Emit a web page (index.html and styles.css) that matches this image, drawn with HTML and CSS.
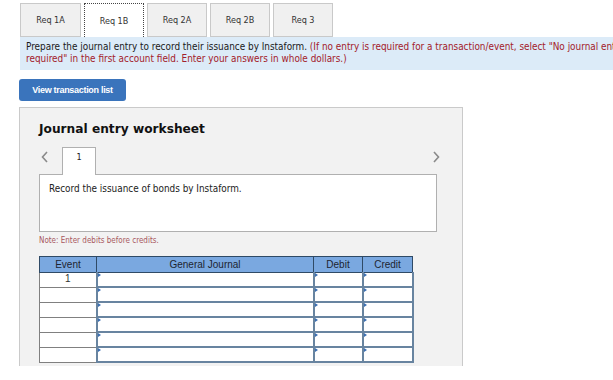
FILE: index.html
```html
<!DOCTYPE html>
<html>
<head>
<meta charset="utf-8">
<link rel="stylesheet" href="styles.css">
</head>
<body>
<div class="tabs">
  <div class="tab">Req 1A</div>
  <div class="tab active">Req 1B</div>
  <div class="tab">Req 2A</div>
  <div class="tab">Req 2B</div>
  <div class="tab">Req 3</div>
  <div class="tab-rest"></div>
</div>
<div class="instr">
  <span class="main">Prepare the journal entry to record their issuance by Instaform.</span> <span class="hint">(If no entry is required for a transaction/event, select "No journal entry</span><br><span class="hint">required" in the first account field. Enter your answers in whole dollars.)</span>
</div>
<button class="btn">View transaction list</button>
<div class="panel">
  <h2 class="title">Journal entry worksheet</h2>
  <div class="nav">
    <svg class="arrow" width="8" height="12" viewBox="0 0 8 12"><polyline points="6,1 1.5,6 6,11" fill="none" stroke="#8a8a8a" stroke-width="1.6"/></svg>
    <div class="pagetab">1</div>
    <svg class="arrow right" width="8" height="12" viewBox="0 0 8 12"><polyline points="2,1 6.5,6 2,11" fill="none" stroke="#8a8a8a" stroke-width="1.6"/></svg>
  </div>
  <div class="record">Record the issuance of bonds by Instaform.</div>
  <div class="note">Note: Enter debits before credits.</div>
  <table class="journal">
    <colgroup><col class="c-ev"><col class="c-gj"><col class="c-dr"><col class="c-cr"></colgroup>
    <thead>
      <tr><th>Event</th><th>General Journal</th><th>Debit</th><th>Credit</th></tr>
    </thead>
    <tbody>
      <tr><td class="ev">1</td><td class="in"></td><td class="in"></td><td class="in"></td></tr>
      <tr><td class="ev"></td><td class="in"></td><td class="in"></td><td class="in"></td></tr>
      <tr><td class="ev"></td><td class="in"></td><td class="in"></td><td class="in"></td></tr>
      <tr><td class="ev"></td><td class="in"></td><td class="in"></td><td class="in"></td></tr>
      <tr><td class="ev"></td><td class="in"></td><td class="in"></td><td class="in"></td></tr>
      <tr><td class="ev"></td><td class="in"></td><td class="in"></td><td class="in"></td></tr>
    </tbody>
  </table>
</div>
</body>
</html>
```
FILE: styles.css
```css
html, body {
  margin: 0;
  padding: 0;
  background: #fff;
  overflow: hidden;
  font-family: "DejaVu Sans Condensed", "DejaVu Sans", sans-serif;
}
.tabs {
  display: flex;
  margin: 3px 0 0 20px;
  height: 34px;
}
.tab {
  width: 60px;
  box-sizing: border-box;
  background: #f0f0f0;
  border: 1px solid #c9c9c9;
  margin-right: 3px;
  font-size: 9px;
  color: #333;
  display: flex;
  align-items: center;
  justify-content: center;
}
.tab:first-child {
  width: 61px;
}
.tab.active {
  background: #fff;
  border: 1px dotted #444;
  border-bottom: none;
}
.tab-rest {
  flex: 1;
}
.instr {
  margin-left: 20px;
  background: #dcebf8;
  padding: 4px 6px 5px;
  font-size: 9.9px;
  line-height: 12px;
  white-space: nowrap;
  overflow: hidden;
  color: #1a1a1a;
}
.instr .hint {
  color: #a3202a;
}
.btn {
  display: block;
  margin: 9px 0 0 19px;
  width: 107px;
  height: 22px;
  border: none;
  border-radius: 3px;
  background: #3a74bc;
  color: #fff;
  font-family: "Liberation Sans Narrow", "Liberation Sans", sans-serif;
  font-weight: bold;
  font-size: 9px;
  letter-spacing: -0.3px;
  padding: 0;
}
.panel {
  margin: 6px 0 0 19px;
  width: 444px;
  box-sizing: border-box;
  background: #f2f2f2;
  border: 1px solid #cacaca;
  border-bottom: none;
  padding: 13px 0 3px 19px;
}
.title {
  margin: 0;
  font-family: "DejaVu Sans", sans-serif;
  font-weight: bold;
  font-size: 12.2px;
  line-height: 16px;
  color: #111;
}
.nav {
  display: flex;
  align-items: flex-start;
  width: 401px;
  margin-top: 10px;
}
.arrow {
  display: block;
  margin: 4px 0 0 2px;
}
.arrow.right {
  margin: 4px 0 0 auto;
}
.pagetab {
  width: 34px;
  height: 28px;
  box-sizing: border-box;
  margin-left: 13px;
  background: #fff;
  border: 1px solid #b0b0b0;
  border-bottom: none;
  font-size: 9px;
  text-align: center;
  padding-top: 4px;
  color: #222;
  margin-bottom: -1px;
  position: relative;
  z-index: 1;
}
.record {
  width: 398px;
  height: 58px;
  box-sizing: border-box;
  background: #fff;
  border: 1px solid #b0b0b0;
  padding: 8px 9px;
  font-size: 9.9px;
  line-height: 12px;
  color: #222;
}
.note {
  margin-top: 4px;
  font-size: 8px;
  line-height: 10px;
  color: #a8585e;
}
.journal {
  margin-top: 10px;
  border-collapse: collapse;
  width: 373px;
  table-layout: fixed;
  font-family: "Liberation Sans", Arial, sans-serif;
  font-size: 10px;
}
.c-ev { width: 57px; }
.c-gj { width: 217px; }
.c-dr { width: 49px; }
.c-cr { width: 50px; }
.journal th {
  background: #7aa8e0;
  border: 1px solid #2f4a66;
  height: 15px;
  padding: 0;
  font-weight: normal;
  color: #1d2530;
}
.journal td {
  height: 13px;
  padding: 0;
  background: #fff;
}
.journal td.ev {
  border: 1px solid #808080;
  text-align: center;
  vertical-align: top;
  color: #333;
  font-size: 10px;
  line-height: 12px;
}
.journal td.in {
  border: 2px solid #6884a0;
  border-top-width: 1px;
  position: relative;
}
.journal td.in::before {
  content: "";
  position: absolute;
  left: 0;
  top: 0;
  border-left: 3px solid #3b6fb2;
  border-top: 2px solid transparent;
  border-bottom: 2px solid transparent;
}
```
